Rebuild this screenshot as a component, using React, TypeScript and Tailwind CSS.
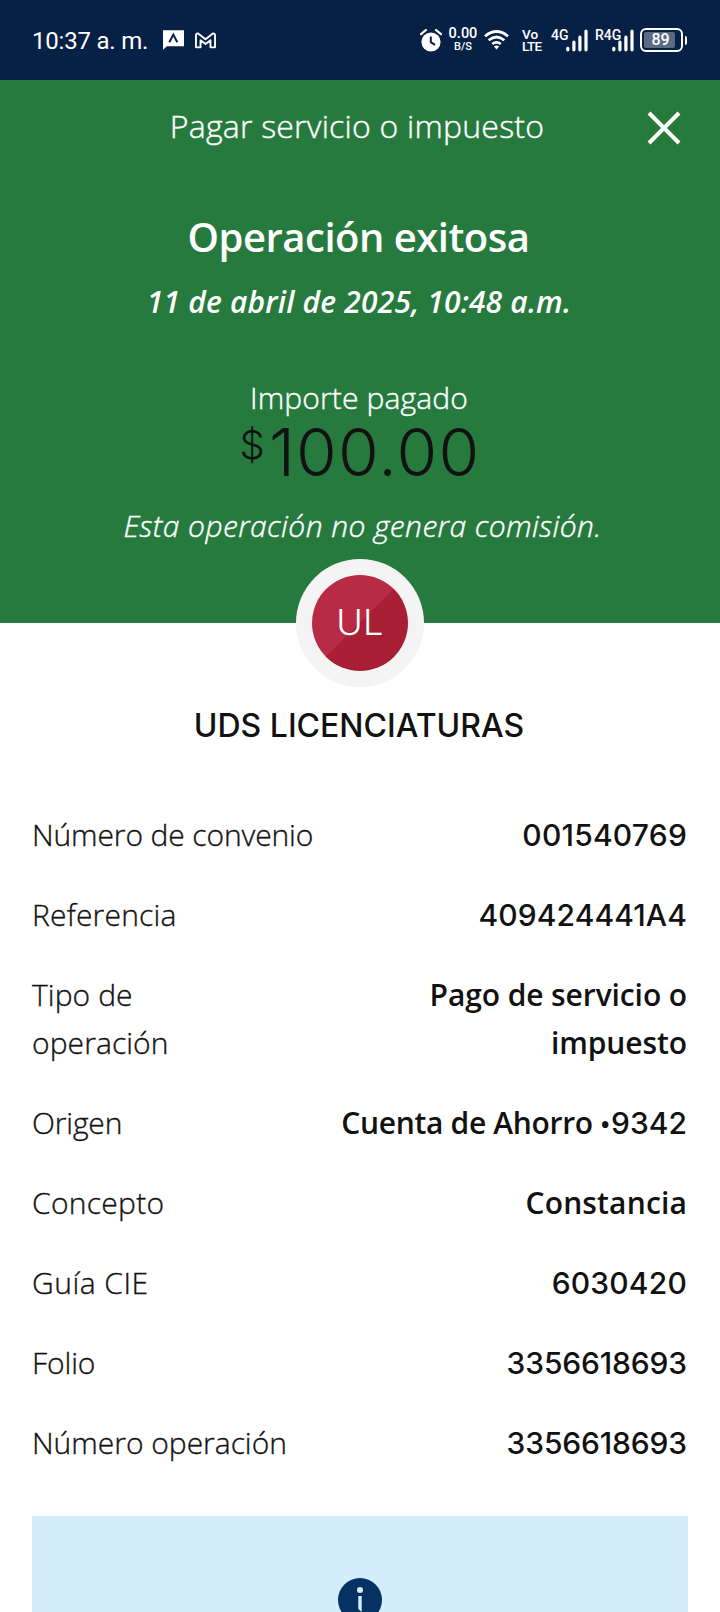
type Detail = {
  label: string;
  value: string;
  tail?: string;
  labelClass: string;
  valueClass: string;
};

const sans = "font-['Open_Sans',sans-serif] font-[600] pr-[1px]";
const digits = "font-['Inter',sans-serif] font-[550] pr-[1px]";

const details: Detail[] = [
  { label: "Número de convenio", value: "001540769", labelClass: "tracking-[-0.12px]", valueClass: `${digits} tracking-[0.22px]` },
  { label: "Referencia", value: "409424441A4", labelClass: "tracking-[0.2px]", valueClass: `${digits} tracking-[0.1px]` },
  { label: "Tipo de operación", value: "Pago de servicio o impuesto", labelClass: "w-[150px] tracking-[0.08px]", valueClass: `${sans} w-[270px] tracking-[-0.1px]` },
  { label: "Origen", value: "Cuenta de Ahorro ", tail: "9342", labelClass: "tracking-[-0.15px]", valueClass: `${sans} tracking-[-0.32px]` },
  { label: "Concepto", value: "Constancia", labelClass: "tracking-[0.28px]", valueClass: `${sans} tracking-[0.15px]` },
  { label: "Guía CIE", value: "6030420", labelClass: "tracking-[0.5px]", valueClass: `${digits} tracking-[0.2px]` },
  { label: "Folio", value: "3356618693", labelClass: "tracking-[-0.1px]", valueClass: `${digits} tracking-[-0.15px]` },
  { label: "Número operación", value: "3356618693", labelClass: "tracking-[-0.02px]", valueClass: `${digits} tracking-[-0.15px]` },
];

function ChatIcon() {
  return (
    <svg width="21" height="20" viewBox="0 0 21 20" className="block">
      <path d="M0 0.3H21V16.3H4L0 19.8Z" fill="#fff" />
      <path d="M6.3 12.3L10.3 4.6L14.3 12.3" fill="none" stroke="#072146" strokeWidth="2" />
    </svg>
  );
}

function MailIcon() {
  return (
    <svg width="21" height="17" viewBox="0 0 22 17" className="block">
      <path
        d="M1 15.7V3.2Q1 1 3.2 1.2L11 7.2L18.8 1.2Q21 1 21 3.2V15.7H16.2V8.2L11 12.2L5.8 8.2V15.7Z"
        fill="none"
        stroke="#fff"
        strokeWidth="2"
        strokeLinejoin="round"
      />
    </svg>
  );
}

function AlarmIcon() {
  return (
    <svg width="22" height="23" viewBox="0 0 22 23" className="block">
      <circle cx="11" cy="13" r="9.6" fill="#fff" />
      <path d="M1 5.2L6 1M21 5.2L16 1" stroke="#fff" strokeWidth="2.2" strokeLinecap="round" />
      <path d="M10.8 7.5V13.2L15 15.8" fill="none" stroke="#072146" strokeWidth="2" />
    </svg>
  );
}

function WifiIcon() {
  return (
    <svg width="25" height="20" viewBox="0 0 25 20" className="block">
      <g fill="none" stroke="#fff" strokeWidth="2.7">
        <path d="M1 6.2Q12.5 -3.2 24 6.2" />
        <path d="M4.7 10.2Q12.5 3.8 20.3 10.2" />
        <path d="M8.2 14Q12.5 10.6 16.8 14" />
      </g>
      <path d="M9.9 16.4Q12.5 14.6 15.1 16.4L12.5 19.6Z" fill="#fff" />
    </svg>
  );
}

function Signal({ label }: { label: string }) {
  return (
    <div className="relative flex h-[24px] items-end justify-end">
      <span className="absolute top-0 left-0 text-[14px] leading-[14px] font-medium">{label}</span>
      <svg width="22" height="23" viewBox="0 0 22 23" className="block">
        <g stroke="#fff" strokeWidth="3.2" strokeLinecap="round">
          <path d="M1.8 19.3V20.8M7.9 13V20.8M13.9 8V20.8M20 2.2V20.8" />
        </g>
      </svg>
    </div>
  );
}

function Battery() {
  return (
    <div className="flex items-center">
      <div className="flex h-[24px] w-[43px] items-center rounded-[6px] border-2 border-white p-[2px]">
        <div className="flex h-[16px] w-[31px] items-center justify-center rounded-[2px] bg-[#5b6b85] pl-[2px] text-[16px] leading-[16px] font-medium">
          89
        </div>
      </div>
      <div className="ml-[2px] h-[9px] w-[2px] rounded-r-[2px] bg-white" />
    </div>
  );
}

function StatusBar() {
  return (
    <div className="flex h-[80px] shrink-0 items-center bg-[#072146] pl-[32px] font-['Roboto',sans-serif] text-white">
      <span className="w-[131px] pt-px text-[24px] leading-[28px] tracking-[-0.2px]">10:37 a. m.</span>
      <ChatIcon />
      <div className="ml-[11px]">
        <MailIcon />
      </div>
      <div className="ml-[204px]">
        <AlarmIcon />
      </div>
      <div className="ml-[6px] flex w-[30px] flex-col items-center pb-[2px] font-medium">
        <span className="text-[14.5px] leading-[14px]">0.00</span>
        <span className="text-[11px] leading-[11px]">B/S</span>
      </div>
      <div className="ml-[6px]">
        <WifiIcon />
      </div>
      <div className="ml-[13px] flex w-[29px] flex-col text-[13.5px] leading-[12px] font-medium">
        <span>Vo</span>
        <span className="tracking-[-0.7px]">LTE</span>
      </div>
      <div className="w-[37px]">
        <Signal label="4G" />
      </div>
      <div className="ml-[7px] w-[39px]">
        <Signal label="R4G" />
      </div>
      <div className="ml-[6px]">
        <Battery />
      </div>
    </div>
  );
}

function Header() {
  return (
    <header className="flex h-[543px] shrink-0 flex-col bg-[#277a3e] text-center text-white">
      <div className="flex h-[94px] shrink-0 items-center">
        <h1 className="flex-1 pb-[2px] pl-[65px] text-[32px] leading-[48px] font-[300] tracking-[0.22px] [-webkit-text-stroke:0.4px_currentColor]">
          Pagar servicio o impuesto
        </h1>
        <svg width="34" height="34" viewBox="0 0 34 34" className="mt-[2px] mr-[39px] ml-[-2px] block">
          <path d="M2 2L32 32M32 2L2 32" stroke="#fff" strokeWidth="4" />
        </svg>
      </div>
      <h2 className="mt-[39px] pr-[3px] text-[40px] leading-[48px] font-[600] tracking-[-0.5px]">Operación exitosa</h2>
      <p className="mt-[17px] pr-[2px] text-[30px] leading-[48px] font-[600] tracking-[0.18px] italic">
        11 de abril de 2025, 10:48 a.m.
      </p>
      <p className="mt-[48px] pr-[2px] text-[30px] leading-[48px] font-[300] tracking-[0.12px] [-webkit-text-stroke:0.4px_currentColor]">
        Importe pagado
      </p>
      <div className="flex h-[66px] shrink-0 items-start justify-center font-['Inter',sans-serif] font-[300] text-[#121212]">
        <span className="text-[40px] leading-[46px]">$</span>
        <span className="ml-[4px] text-[66px] leading-[60px] tracking-[1.2px]">100.00</span>
      </div>
      <p className="mt-[14px] pl-[5px] text-[30px] leading-[48px] font-[300] tracking-[0.42px] italic [-webkit-text-stroke:0.4px_currentColor]">
        Esta operación no genera comisión.
      </p>
    </header>
  );
}

function Avatar() {
  return (
    <div className="relative mx-auto mt-[-64px] flex h-[128px] w-[128px] shrink-0 items-center justify-center rounded-full bg-[#f4f4f4]">
      <div className="flex h-[96px] w-[96px] items-center justify-center rounded-full bg-[linear-gradient(135deg,#b92a45_50%,#a81e35_50%)] pb-[3px] font-['Inter',sans-serif] text-[36px] leading-[48px] font-[300] tracking-[0.3px] text-white">
        UL
      </div>
    </div>
  );
}

export default function App() {
  return (
    <div className="flex h-[1612px] w-[720px] flex-col overflow-hidden bg-white font-['Open_Sans',sans-serif] text-[#121212]">
      <StatusBar />
      <Header />
      <Avatar />
      <p className="mt-[15px] shrink-0 pr-[2px] text-center font-['Inter',sans-serif] text-[32px] leading-[48px] font-[550]">
        UDS LICENCIATURAS
      </p>
      <dl className="mt-[61px] flex shrink-0 flex-col gap-[32px] px-[32px] text-[30px] leading-[48px]">
        {details.map((d) => (
          <div key={d.label} className="flex justify-between">
            <dt className={`font-[300] [-webkit-text-stroke:0.35px_currentColor] ${d.labelClass}`}>{d.label}</dt>
            <dd className={`text-right ${d.valueClass}`}>
              {d.value}
              {d.tail && (
                <>
                  <span className="text-[26px] leading-[26px] tracking-[1px]">•</span>
                  <span className="font-['Inter',sans-serif] leading-[30px] font-[550] tracking-[0px]">{d.tail}</span>
                </>
              )}
            </dd>
          </div>
        ))}
      </dl>
      <div className="mx-[32px] mt-[49px] flex h-[200px] shrink-0 justify-center bg-[#d4edfc] pt-[62px]">
        <svg width="44" height="44" viewBox="0 0 44 44" className="block">
          <circle cx="22" cy="22" r="22" fill="#043263" />
          <circle cx="22" cy="12" r="3" fill="#d4edfc" />
          <path d="M20.3 18H23.7V34L20.3 31Z" fill="#d4edfc" />
        </svg>
      </div>
    </div>
  );
}
